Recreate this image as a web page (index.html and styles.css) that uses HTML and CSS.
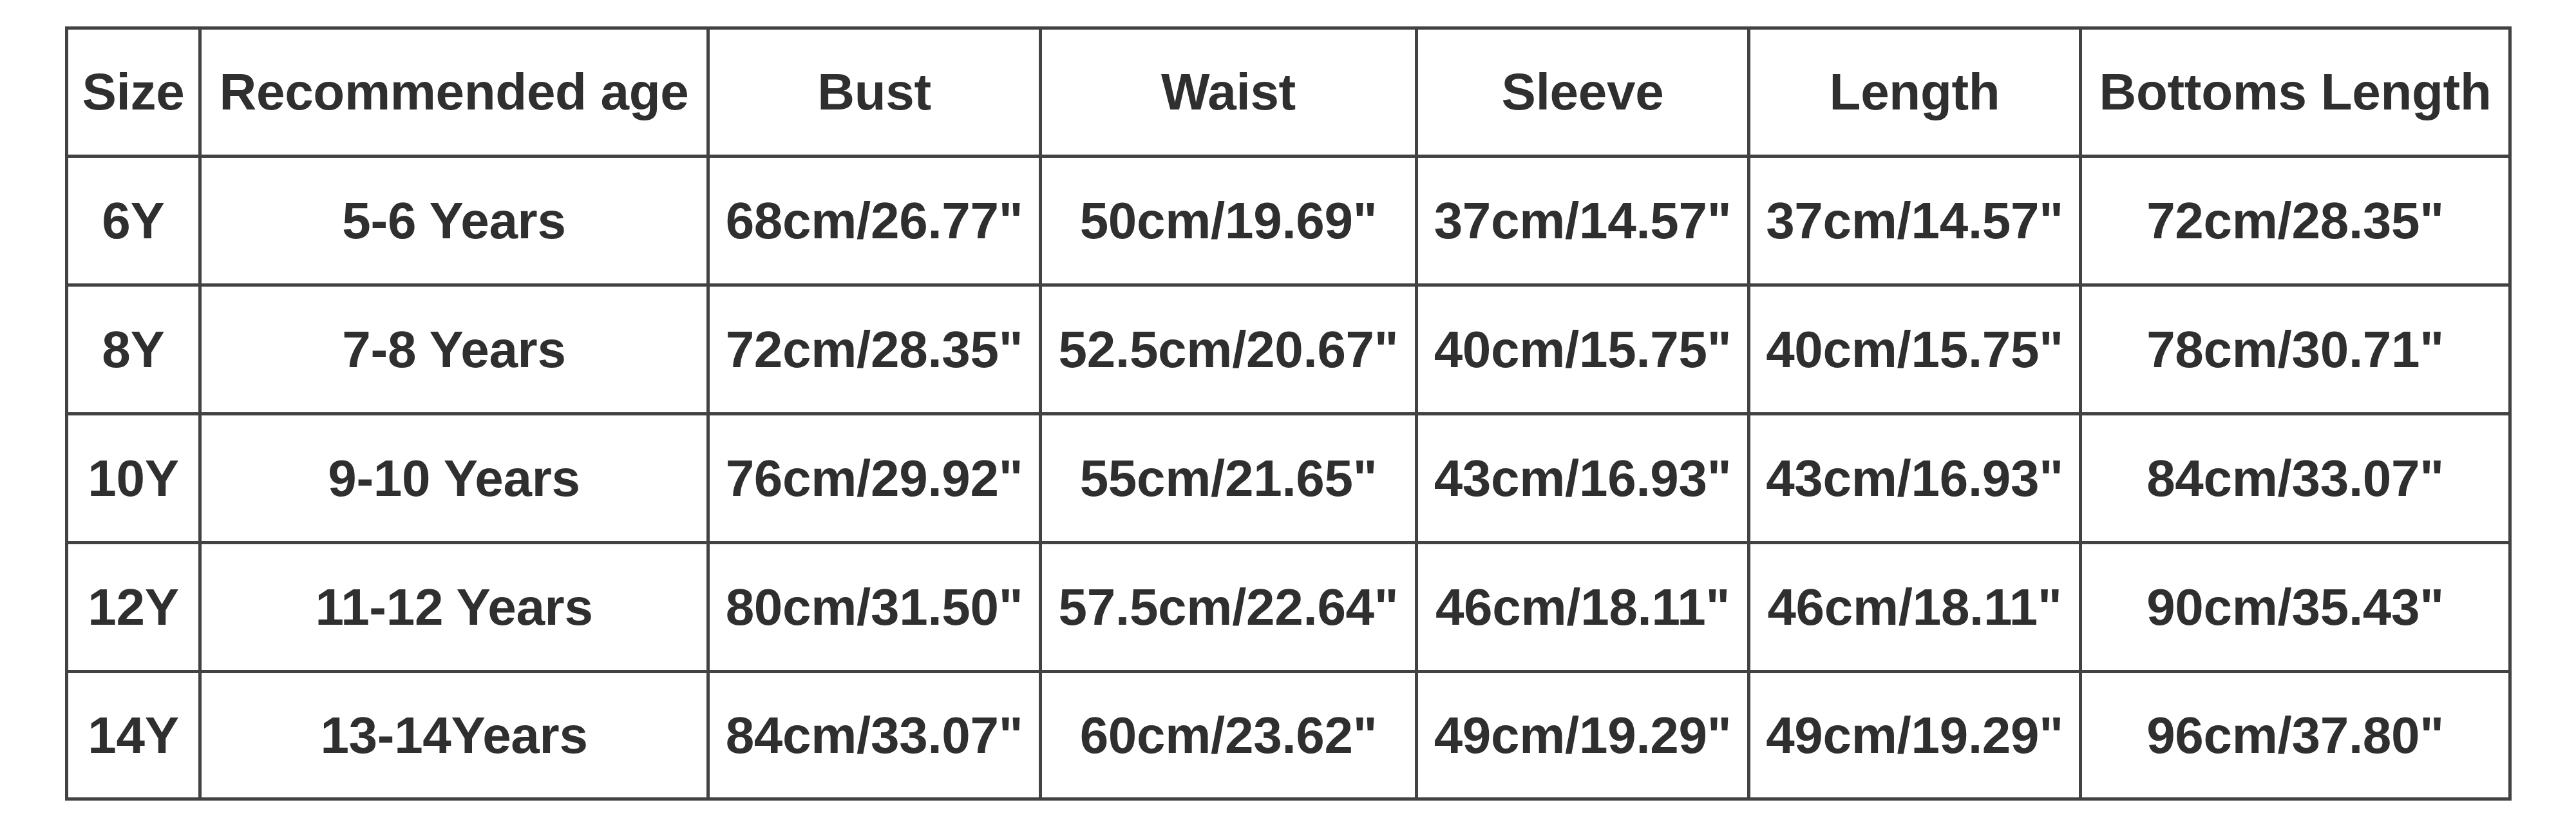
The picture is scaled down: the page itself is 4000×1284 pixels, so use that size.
FILE: index.html
```html
<!DOCTYPE html>
<html lang="en">
<head>
<meta charset="utf-8">
<title>Size Chart</title>
<link rel="stylesheet" href="styles.css">
</head>
<body>
<table class="size-chart">
  <colgroup>
    <col class="c-size">
    <col class="c-age">
    <col class="c-bust">
    <col class="c-waist">
    <col class="c-sleeve">
    <col class="c-length">
    <col class="c-bottoms">
  </colgroup>
  <thead>
    <tr class="row-head">
      <th>Size</th>
      <th>Recommended age</th>
      <th>Bust</th>
      <th>Waist</th>
      <th>Sleeve</th>
      <th>Length</th>
      <th>Bottoms Length</th>
    </tr>
  </thead>
  <tbody>
    <tr>
      <td>6Y</td>
      <td>5-6 Years</td>
      <td>68cm/26.77"</td>
      <td>50cm/19.69"</td>
      <td>37cm/14.57"</td>
      <td>37cm/14.57"</td>
      <td>72cm/28.35"</td>
    </tr>
    <tr>
      <td>8Y</td>
      <td>7-8 Years</td>
      <td>72cm/28.35"</td>
      <td>52.5cm/20.67"</td>
      <td>40cm/15.75"</td>
      <td>40cm/15.75"</td>
      <td>78cm/30.71"</td>
    </tr>
    <tr>
      <td>10Y</td>
      <td>9-10 Years</td>
      <td>76cm/29.92"</td>
      <td>55cm/21.65"</td>
      <td>43cm/16.93"</td>
      <td>43cm/16.93"</td>
      <td>84cm/33.07"</td>
    </tr>
    <tr>
      <td>12Y</td>
      <td>11-12 Years</td>
      <td>80cm/31.50"</td>
      <td>57.5cm/22.64"</td>
      <td>46cm/18.11"</td>
      <td>46cm/18.11"</td>
      <td>90cm/35.43"</td>
    </tr>
    <tr class="row-last">
      <td>14Y</td>
      <td>13-14Years</td>
      <td>84cm/33.07"</td>
      <td>60cm/23.62"</td>
      <td>49cm/19.29"</td>
      <td>49cm/19.29"</td>
      <td>96cm/37.80"</td>
    </tr>
  </tbody>
</table>
</body>
</html>
```
FILE: styles.css
```css
html, body {
  margin: 0;
  padding: 0;
  background: #ffffff;
}

body {
  padding: 41px 0 0 101px;
  font-family: "Liberation Sans", Arial, sans-serif;
}

.size-chart {
  border-collapse: separate;
  border-spacing: 5px;
  background: #424242;
  table-layout: fixed;
  width: 3799px;
}

.c-size { width: 202px; }
.c-age { width: 784px; }
.c-bust { width: 511px; }
.c-waist { width: 579px; }
.c-sleeve { width: 511px; }
.c-length { width: 510px; }
.c-bottoms { width: 662px; }

.size-chart th,
.size-chart td {
  background: #ffffff;
  color: #2f2f2f;
  font-size: 80px;
  font-weight: bold;
  text-align: center;
  vertical-align: middle;
  padding: 0;
  height: 195px;
  white-space: nowrap;
  overflow: visible;
  letter-spacing: -0.3px;
}

.size-chart .row-head th {
  height: 194px;
}

.size-chart .row-last td {
  height: 193px;
}
```
